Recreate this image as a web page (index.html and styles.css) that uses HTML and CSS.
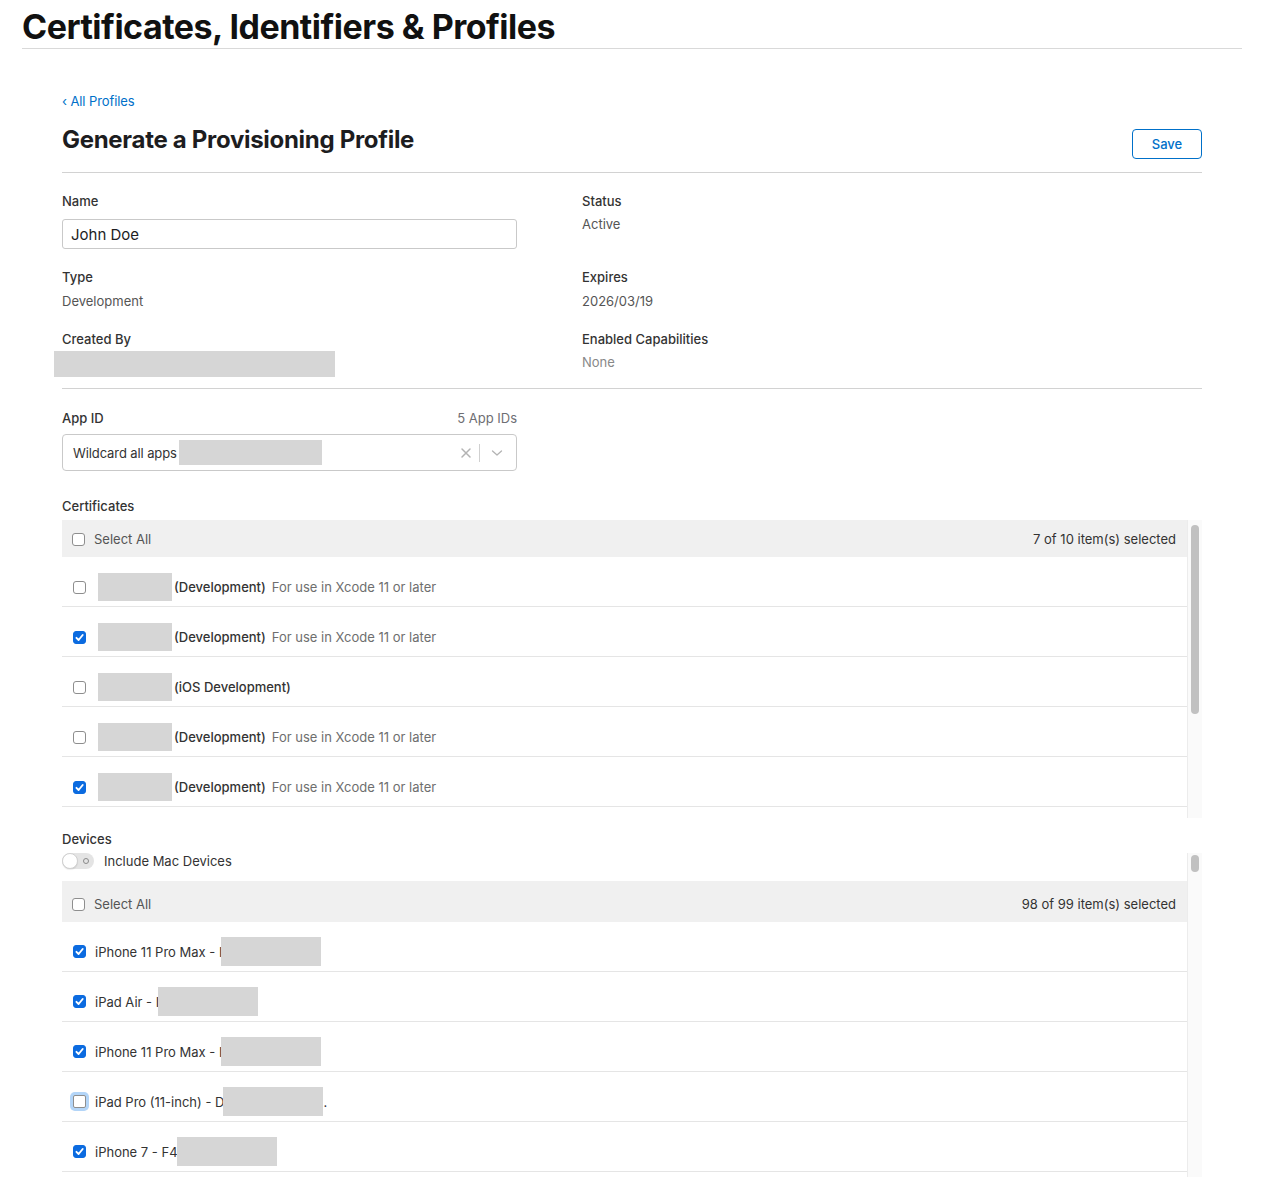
FILE: index.html
```html
<!DOCTYPE html>
<html lang="en">
<head>
<meta charset="utf-8">
<title>Certificates, Identifiers &amp; Profiles</title>
<link rel="stylesheet" href="styles.css">
</head>
<body>
<header class="site-header">
  <h1 class="site-title">Certificates, Identifiers &amp; Profiles</h1>
</header>
<main class="main">
  <a class="back-link" href="#">‹ All Profiles</a>
  <div class="page-head">
    <h2 class="page-title">Generate a Provisioning Profile</h2>
    <button class="btn-save" type="button">Save</button>
  </div>

  <section class="details">
    <div class="field">
      <div class="label">Name</div>
      <input class="text-input" type="text" value="John Doe">
    </div>
    <div class="field">
      <div class="label">Status</div>
      <div class="value">Active</div>
    </div>
    <div class="field">
      <div class="label">Type</div>
      <div class="value value-b">Development</div>
    </div>
    <div class="field">
      <div class="label">Expires</div>
      <div class="value value-b">2026/03/19</div>
    </div>
    <div class="field r3">
      <div class="label">Created By</div>
      <div class="redact created"></div>
    </div>
    <div class="field r3">
      <div class="label">Enabled Capabilities</div>
      <div class="value muted">None</div>
    </div>
  </section>

  <section class="appid">
    <div class="label-row">
      <span class="label">App ID</span>
      <span class="count">5 App IDs</span>
    </div>
    <div class="select">
      <span class="select-text">Wildcard all apps</span>
      <span class="redact sel-redact"></span>
      <span class="select-controls">
        <svg class="ic-x" width="12" height="12" viewBox="0 0 12 12"><path d="M2 2 L10 10 M10 2 L2 10" stroke="#b3b3b3" stroke-width="1.5" stroke-linecap="round"/></svg>
        <span class="sep"></span>
        <svg class="ic-chev" width="12" height="12" viewBox="0 0 12 12"><path d="M1.5 4 L6 8 L10.5 4" stroke="#b3b3b3" stroke-width="1.3" fill="none" stroke-linecap="round" stroke-linejoin="round"/></svg>
      </span>
    </div>
  </section>

  <div class="label sec-label cert-label">Certificates</div>
  <div class="list-box cert-box">
    <div class="list">
      <div class="list-head">
        <span class="cb"></span>
        <span class="head-text">Select All</span>
        <span class="sel-count">7 of 10 item(s) selected</span>
      </div>
      <div class="row">
        <span class="cb"></span>
        <span class="redact cert-redact"></span>
        <span class="cert-name">(Development)</span>
        <span class="cert-desc">For use in Xcode 11 or later</span>
      </div>
      <div class="row">
        <span class="cb on"><svg width="11" height="11" viewBox="0 0 10 10"><path d="M2.2 5.3 L4.2 7.3 L7.9 2.7" stroke="#fff" stroke-width="1.7" fill="none" stroke-linecap="round" stroke-linejoin="round"/></svg></span>
        <span class="redact cert-redact"></span>
        <span class="cert-name">(Development)</span>
        <span class="cert-desc">For use in Xcode 11 or later</span>
      </div>
      <div class="row">
        <span class="cb"></span>
        <span class="redact cert-redact"></span>
        <span class="cert-name">(iOS Development)</span>
      </div>
      <div class="row">
        <span class="cb"></span>
        <span class="redact cert-redact"></span>
        <span class="cert-name">(Development)</span>
        <span class="cert-desc">For use in Xcode 11 or later</span>
      </div>
      <div class="row">
        <span class="cb on"><svg width="11" height="11" viewBox="0 0 10 10"><path d="M2.2 5.3 L4.2 7.3 L7.9 2.7" stroke="#fff" stroke-width="1.7" fill="none" stroke-linecap="round" stroke-linejoin="round"/></svg></span>
        <span class="redact cert-redact"></span>
        <span class="cert-name">(Development)</span>
        <span class="cert-desc">For use in Xcode 11 or later</span>
      </div>
    </div>
    <div class="scrollbar"><div class="thumb cert-thumb"></div></div>
  </div>

  <div class="label sec-label dev-label">Devices</div>
  <div class="list-box dev-box">
    <div class="list">
      <div class="toggle-row">
        <span class="toggle"><span class="knob"></span><span class="off-mark"></span></span>
        <span class="toggle-text">Include Mac Devices</span>
      </div>
      <div class="list-head dev-head">
        <span class="cb"></span>
        <span class="head-text">Select All</span>
        <span class="sel-count">98 of 99 item(s) selected</span>
      </div>
      <div class="row dev-row">
        <span class="cb on"><svg width="11" height="11" viewBox="0 0 10 10"><path d="M2.2 5.3 L4.2 7.3 L7.9 2.7" stroke="#fff" stroke-width="1.7" fill="none" stroke-linecap="round" stroke-linejoin="round"/></svg></span>
        <span class="dev-name">iPhone 11 Pro Max - I</span>
        <span class="redact dev-redact"></span>
      </div>
      <div class="row dev-row">
        <span class="cb on"><svg width="11" height="11" viewBox="0 0 10 10"><path d="M2.2 5.3 L4.2 7.3 L7.9 2.7" stroke="#fff" stroke-width="1.7" fill="none" stroke-linecap="round" stroke-linejoin="round"/></svg></span>
        <span class="dev-name">iPad Air - I</span>
        <span class="redact dev-redact"></span>
      </div>
      <div class="row dev-row">
        <span class="cb on"><svg width="11" height="11" viewBox="0 0 10 10"><path d="M2.2 5.3 L4.2 7.3 L7.9 2.7" stroke="#fff" stroke-width="1.7" fill="none" stroke-linecap="round" stroke-linejoin="round"/></svg></span>
        <span class="dev-name">iPhone 11 Pro Max - I</span>
        <span class="redact dev-redact"></span>
      </div>
      <div class="row dev-row">
        <span class="cb focus"></span>
        <span class="dev-name">iPad Pro (11-inch) - D</span>
        <span class="redact dev-redact"></span>
        <span class="dev-tail">.</span>
      </div>
      <div class="row dev-row">
        <span class="cb on"><svg width="11" height="11" viewBox="0 0 10 10"><path d="M2.2 5.3 L4.2 7.3 L7.9 2.7" stroke="#fff" stroke-width="1.7" fill="none" stroke-linecap="round" stroke-linejoin="round"/></svg></span>
        <span class="dev-name">iPhone 7 - F4</span>
        <span class="redact dev-redact"></span>
      </div>
    </div>
    <div class="scrollbar"><div class="thumb dev-thumb"></div></div>
  </div>
</main>
</body>
</html>
```

FILE: styles.css
```css
* { box-sizing: border-box; }

html, body {
  margin: 0;
  padding: 0;
  height: 1195px;
  overflow: hidden;
  background: #fff;
}

body {
  font-family: Inter, "Noto Sans", "Liberation Sans", sans-serif;
  font-size: 13px;
  color: #1d1d1f;
}

.site-header {
  margin: 0 29px 0 22px;
  padding-top: 7px;
  padding-bottom: 1px;
  border-bottom: 1px solid #d9d9d9;
}

.site-title {
  margin: 0;
  font-size: 34px;
  line-height: 40px;
  font-weight: 700;
  letter-spacing: -0.5px;
  color: #111;
}

.main {
  padding: 0 69px 0 62px;
}

.back-link {
  display: block;
  margin-top: 44px;
  font-size: 13px;
  line-height: 16px;
  color: #0070c9;
  text-decoration: none;
  letter-spacing: -0.1px;
}

.page-head {
  display: flex;
  justify-content: space-between;
  align-items: flex-start;
  margin-top: 16px;
  padding-bottom: 13px;
  border-bottom: 1px solid #d2d2d2;
}

.page-title {
  margin: 0;
  font-size: 24px;
  line-height: 30px;
  font-weight: 700;
  letter-spacing: -0.3px;
  color: #1d1d1f;
}

.btn-save {
  margin-top: 4px;
  width: 70px;
  height: 30px;
  border: 1px solid #0070c9;
  border-radius: 4px;
  background: #fff;
  color: #0070c9;
  font-family: Inter, "Noto Sans", sans-serif;
  font-size: 13px;
  font-weight: 500;
  padding: 0;
}

.details {
  display: grid;
  grid-template-columns: 520px 1fr;
  row-gap: 20px;
  padding: 20px 0 11px;
  border-bottom: 1px solid #d2d2d2;
}

.r3 { margin-top: 2px; }

.label {
  font-size: 13px;
  line-height: 16px;
  font-weight: 500;
  color: #333;
}

.value {
  margin-top: 7px;
  line-height: 16px;
  color: #555;
}

.value-b { margin-top: 8px; }

.muted { color: #888; }

.text-input {
  display: block;
  margin-top: 10px;
  width: 455px;
  height: 30px;
  border: 1px solid #c9c9c9;
  border-radius: 3px;
  padding: 0 8px;
  font-family: Inter, "Noto Sans", sans-serif;
  font-size: 15px;
  color: #1d1d1f;
  outline: none;
}

.redact {
  display: block;
  background: #d6d6d6;
  flex: none;
}

.created {
  margin-top: 4px;
  margin-left: -8px;
  width: 281px;
  height: 26px;
}

.appid {
  width: 455px;
  padding-top: 21px;
}

.label-row {
  display: flex;
  justify-content: space-between;
  align-items: center;
}

.count {
  font-size: 13px;
  line-height: 16px;
  color: #6e6e73;
}

.select {
  margin-top: 8px;
  height: 37px;
  border: 1px solid #c9c9c9;
  border-radius: 4px;
  display: flex;
  align-items: center;
  padding-left: 10px;
}

.select-text { color: #333; letter-spacing: -0.1px; }

.sel-redact {
  width: 143px;
  height: 25px;
  margin-left: 2px;
}

.select-controls {
  margin-left: auto;
  display: flex;
  align-items: center;
  padding-right: 13px;
}

.ic-x { display: block; }

.sep {
  width: 1px;
  height: 18px;
  background: #d0d0d0;
  margin: 0 11px 0 7px;
}

.ic-chev { display: block; }

.sec-label { line-height: 16px; }
.cert-label { margin-top: 27px; }
.dev-label { margin-top: 13px; }

.list-box {
  margin-top: 6px;
  display: flex;
}

.cert-box { height: 298px; }
.dev-box { height: 324px; }

.list {
  flex: 1;
  overflow: hidden;
}

.list-head {
  height: 37px;
  background: #f0f0f0;
  display: flex;
  align-items: center;
  padding: 1px 11px 0 10px;
}

.head-text {
  margin-left: 9px;
  color: #555;
}

.sel-count {
  margin-left: auto;
  color: #333;
}

.cb {
  width: 13px;
  height: 13px;
  border: 1px solid #8e8e8e;
  border-radius: 3px;
  background: #fff;
  flex: none;
  display: flex;
  align-items: center;
  justify-content: center;
}

.cb.on {
  background: #0b6be0;
  border-color: #0b6be0;
}

.cb svg { display: block; }

.cb.focus {
  box-shadow: 0 0 0 3px #b3d5f8;
  border-radius: 2px;
}

.row {
  height: 50px;
  padding: 11px 0 0 11px;
  border-bottom: 1px solid #e5e5e5;
  display: flex;
  align-items: center;
  white-space: nowrap;
}

.cert-redact {
  width: 74px;
  height: 28px;
  margin-left: 12px;
}

.cert-name {
  margin-left: 2px;
  font-weight: 500;
  color: #333;
}

.cert-desc {
  margin-left: 6px;
  color: #6e6e6e;
}

.scrollbar {
  width: 15px;
  flex: none;
  background: #fafafa;
  border-left: 1px solid #ececec;
  padding: 5px 3px 0 3px;
}

.thumb {
  width: 8px;
  border-radius: 4px;
  background: #c1c1c1;
}

.cert-thumb { height: 189px; }
.dev-thumb { height: 17px; margin-top: -3px; }

.toggle-row {
  display: flex;
  align-items: center;
  height: 16px;
}

.toggle {
  position: relative;
  width: 32px;
  height: 16px;
  border-radius: 8px;
  background: #e4e4e4;
  flex: none;
}

.knob {
  position: absolute;
  left: 0;
  top: 0;
  width: 16px;
  height: 16px;
  border-radius: 50%;
  background: #fff;
  border: 1px solid #d0d0d0;
  box-shadow: 0 1px 1px rgba(0,0,0,0.08);
}

.off-mark {
  position: absolute;
  left: 21px;
  top: 5px;
  width: 6px;
  height: 6px;
  border-radius: 50%;
  border: 1px solid #8a8a8a;
}

.toggle-text {
  margin-left: 10px;
  color: #333;
}

.dev-head {
  margin-top: 12px;
  height: 41px;
  padding-top: 5px;
}

.dev-row { padding-top: 10px; }

.dev-name {
  display: block;
  margin-left: 9px;
  color: #333;
}

.dev-redact {
  width: 100px;
  height: 29px;
  margin-left: -1px;
}

.dev-tail { color: #333; }
```
